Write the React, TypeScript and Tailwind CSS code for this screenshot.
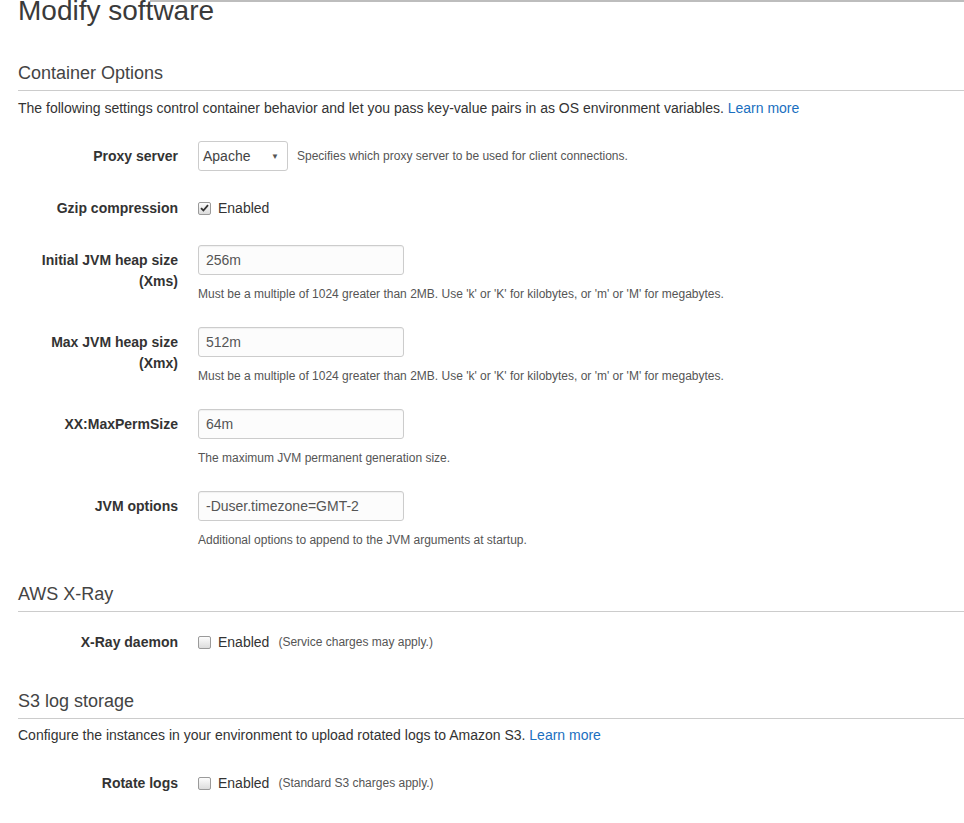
import React from "react";

function Check({ checked }: { checked?: boolean }) {
  return (
    <span className="inline-flex w-[13px] h-[13px] rounded-[2px] border border-[#9a9a9a] bg-gradient-to-b from-[#fdfdfd] to-[#dcdcdc] items-center justify-center">
      {checked && (
        <svg width="9" height="8" viewBox="0 0 9 8">
          <path d="M1 4.2 L3.4 6.5 L8 1.2" fill="none" stroke="#333" strokeWidth="1.8" />
        </svg>
      )}
    </span>
  );
}

function Heading({ title, mt }: { title: string; mt: string }) {
  return (
    <div className={`${mt} ml-[18px] border-b border-[#cccccc] pb-[7px] text-[18px] leading-[20px] text-[#444]`}>
      {title}
    </div>
  );
}

function Row({
  label,
  mt,
  children,
}: {
  label: React.ReactNode;
  mt: string;
  children: React.ReactNode;
}) {
  return (
    <div className={`${mt} flex`}>
      <div className="w-[178px] shrink-0 pt-[5px] text-right text-[14px] font-bold leading-[21px] text-[#333]">
        {label}
      </div>
      <div className="ml-[20px]">{children}</div>
    </div>
  );
}

function TextInput({ value, help }: { value: string; help: string }) {
  return (
    <div>
      <div className="w-[206px] h-[30px] rounded-[3px] border border-[#cccccc] bg-[#fcfcfc] shadow-[inset_0_1px_1px_rgba(0,0,0,0.05)] pl-[7px] flex items-center text-[14px] text-[#555]">
        {value}
      </div>
      <div className="mt-[11px] text-[12px] leading-[17px] text-[#555]">{help}</div>
    </div>
  );
}

function Toggle({ checked, note }: { checked?: boolean; note?: string }) {
  return (
    <div className="h-[30px] flex items-center">
      <Check checked={checked} />
      <span className="ml-[7px] text-[14px] text-[#333]">Enabled</span>
      {note && <span className="ml-[9px] text-[12px] text-[#555]">{note}</span>}
    </div>
  );
}

export default function App() {
  return (
    <div className="w-[964px] min-h-[823px] bg-white overflow-hidden font-['Liberation_Sans',Arial,sans-serif]">
      <div className="ml-[150px] h-[2px] bg-[#bdbdbd]" />
      <div className="-mt-[5px] ml-[18px] text-[28px] leading-[28px] text-[#3a3a3a]">Modify software</div>

      <Heading title="Container Options" mt="mt-[38px]" />
      <div className="mt-[7px] ml-[18px] text-[14px] leading-[20px] text-[#333]">
        The following settings control container behavior and let you pass key-value pairs in as OS environment variables.{" "}
        <span className="text-[#1a6fc0]">Learn more</span>
      </div>

      <Row label="Proxy server" mt="mt-[23px]">
        <div className="flex items-center">
          <div className="w-[90px] h-[30px] rounded-[3px] border border-[#cccccc] bg-white flex items-center justify-between pl-[4px] pr-[8px] pt-[1px] text-[14px] text-[#444]">
            <span>Apache</span>
            <span className="text-[8px] text-[#555]">▼</span>
          </div>
          <span className="ml-[9px] text-[12px] text-[#555]">Specifies which proxy server to be used for client connections.</span>
        </div>
      </Row>

      <Row label="Gzip compression" mt="mt-[22px]">
        <Toggle checked />
      </Row>

      <Row label={<>Initial JVM heap size<br />(Xms)</>} mt="mt-[22px]">
        <TextInput value="256m" help="Must be a multiple of 1024 greater than 2MB. Use 'k' or 'K' for kilobytes, or 'm' or 'M' for megabytes." />
      </Row>

      <Row label={<>Max JVM heap size<br />(Xmx)</>} mt="mt-[24px]">
        <TextInput value="512m" help="Must be a multiple of 1024 greater than 2MB. Use 'k' or 'K' for kilobytes, or 'm' or 'M' for megabytes." />
      </Row>

      <Row label="XX:MaxPermSize" mt="mt-[24px]">
        <TextInput value="64m" help="The maximum JVM permanent generation size." />
      </Row>

      <Row label="JVM options" mt="mt-[24px]">
        <TextInput value="-Duser.timezone=GMT-2" help="Additional options to append to the JVM arguments at startup." />
      </Row>

      <Heading title="AWS X-Ray" mt="mt-[35px]" />

      <Row label="X-Ray daemon" mt="mt-[15px]">
        <Toggle note="(Service charges may apply.)" />
      </Row>

      <Heading title="S3 log storage" mt="mt-[34px]" />
      <div className="mt-[6px] ml-[18px] text-[14px] leading-[20px] text-[#333]">
        Configure the instances in your environment to upload rotated logs to Amazon S3.{" "}
        <span className="text-[#1a6fc0]">Learn more</span>
      </div>

      <Row label="Rotate logs" mt="mt-[23px]">
        <Toggle note="(Standard S3 charges apply.)" />
      </Row>
    </div>
  );
}
